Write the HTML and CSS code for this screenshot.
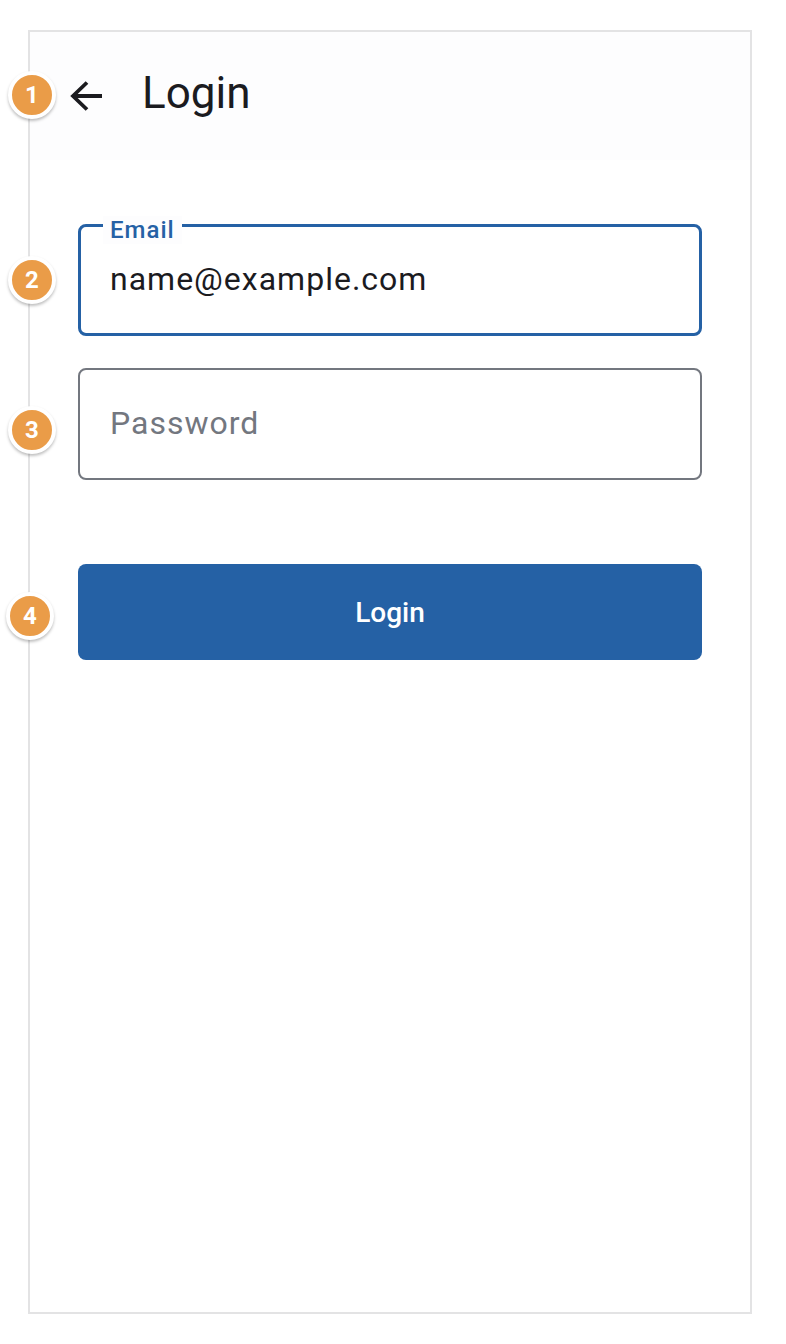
FILE: index.html
```html
<!DOCTYPE html>
<html lang="en">
<head>
    <meta charset="UTF-8">
    <meta name="viewport" content="width=device-width, initial-scale=1.0">
    <title>Login</title>
    <link rel="stylesheet" href="styles.css">
</head>
<body>

<div class="screen">
    <header class="app-bar">
        <a class="back" href="#" aria-label="Back">
            <svg viewBox="0 0 32 32" width="32" height="32">
                <path d="M32 16H4M17 2.500 3 16 17 29.500" fill="none" stroke="#1b1b1f" stroke-width="3.800"/>
            </svg>
        </a>
        <h1>Login</h1>
    </header>

    <form class="login-form">
        <div class="field field-active">
            <label for="email">Email</label>
            <input type="text" id="email" value="name@example.com">
        </div>
        <div class="field">
            <input type="password" id="password" placeholder="Password">
        </div>
        <button type="button" class="submit">Login</button>
    </form>

    <span class="badge badge-1">1</span>
    <span class="badge badge-2">2</span>
    <span class="badge badge-3">3</span>
    <span class="badge badge-4">4</span>
</div>

</body>
</html>
```

FILE: styles.css
```css
body {
    font-family: Roboto, Arial, sans-serif;
    margin: 0;
    padding: 0;
    background-color: #fff;
}
.screen {
    position: relative;
    box-sizing: border-box;
    width: 724px;
    height: 1284px;
    margin: 30px 0 0 28px;
    border: 2px solid #e3e3e4;
}
.app-bar {
    display: flex;
    align-items: center;
    height: 128px;
    padding-left: 40px;
    background-color: #fdfdfe;
}
.back {
    display: flex;
    width: 32px;
    margin-right: 40px;
}
.app-bar h1 {
    margin: 0 0 6px;
    font-size: 44px;
    font-weight: 400;
    color: #1b1b1f;
}
.login-form {
    display: flex;
    flex-direction: column;
    gap: 32px;
    padding: 64px 48px 0;
}
.field {
    position: relative;
}
.field input {
    display: block;
    box-sizing: border-box;
    width: 100%;
    height: 112px;
    padding: 0 30px 2px;
    border: 2px solid #73777f;
    border-radius: 8px;
    outline: none;
    background: none;
    font-family: inherit;
    font-size: 32px;
    letter-spacing: 1px;
    color: #1b1b1f;
}
.field input::placeholder {
    color: #73777f;
    opacity: 1;
}
.field-active input {
    border: 3px solid #2561a5;
    padding: 0 29px 2px;
}
.field label {
    position: absolute;
    top: -8px;
    left: 25px;
    padding: 0 7px;
    background-color: #fdfdfe;
    font-size: 24px;
    line-height: 28px;
    font-weight: 500;
    letter-spacing: 1px;
    color: #2561a5;
}
.submit {
    height: 96px;
    margin-top: 52px;
    border: none;
    border-radius: 8px;
    background-color: #2561a5;
    font-family: inherit;
    font-size: 28px;
    font-weight: 500;
    color: #fff;
}
.badge {
    position: absolute;
    display: flex;
    align-items: center;
    justify-content: center;
    box-sizing: border-box;
    width: 48px;
    height: 48px;
    border: 4px solid #fff;
    border-radius: 50%;
    background-color: #ea9c48;
    box-shadow: 0 2px 3px rgba(0, 0, 0, 0.25);
    font-size: 24px;
    font-weight: 700;
    color: #fff;
}
.badge-1 { left: -22px; top: 39px; }
.badge-2 { left: -22px; top: 224px; }
.badge-3 { left: -22px; top: 374px; }
.badge-4 { left: -24px; top: 560px; }
```
